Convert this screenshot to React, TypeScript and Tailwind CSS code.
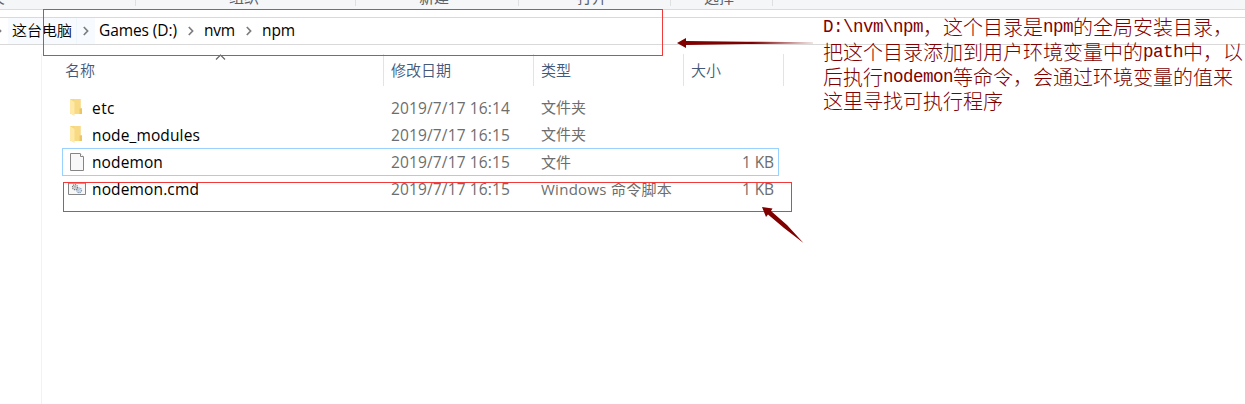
import React from "react";

const ribbonGroups = [
  { label: "夹", width: "w-[136px]", pad: "-ml-[10px]" },
  { label: "组织", width: "w-[220px]", pad: "ml-[93px]" },
  { label: "新建", width: "w-[163px]", pad: "ml-[63px]" },
  { label: "打开", width: "w-[152px]", pad: "ml-[58px]" },
  { label: "选择", width: "w-[102px]", pad: "ml-[33px]" },
];

const files = [
  { icon: "folder", name: "etc", nameW: 23, date: "2019/7/17 16:14", type: "文件夹", typeW: 45, size: "" },
  { icon: "folder", name: "node_modules", nameW: 108, date: "2019/7/17 16:15", type: "文件夹", typeW: 45, size: "" },
  { icon: "file", name: "nodemon", nameW: 71, date: "2019/7/17 16:15", type: "文件", typeW: 30, size: "1 KB" },
  { icon: "script", name: "nodemon.cmd", nameW: 107, date: "2019/7/17 16:15", type: "Windows 命令脚本", typeW: 131, size: "1 KB" },
];

/** Single-line label whose glyphs are fitted to a fixed advance width. */
function Label({ text, width }: { text: string; width: number }) {
  const ref = React.useRef<HTMLSpanElement>(null);
  React.useLayoutEffect(() => {
    const el = ref.current;
    if (!el) return;
    el.style.letterSpacing = "0px";
    const natural = el.getBoundingClientRect().width;
    el.style.letterSpacing = `${(width - natural) / text.length}px`;
  }, [text, width]);
  return (
    <span ref={ref} className="inline-block whitespace-pre">
      {text}
    </span>
  );
}

function Chevron() {
  return (
    <svg width="6" height="10" viewBox="0 0 6 10" className="shrink-0">
      <path d="M0.8 1L4.6 5L0.8 9" fill="none" stroke="#7d7d7d" strokeWidth="1.7" />
    </svg>
  );
}

function FileIcon({ kind }: { kind: string }) {
  if (kind === "folder") {
    return (
      <svg width="18" height="20" viewBox="0 0 18 20">
        <path d="M2 0h10.5v9.5H14V15H2Z" fill="#f5d57f" />
        <path d="M6 0h6.5v9.5H14V15H6Z" fill="#f8d984" />
        <path d="M2 0l4.5 3V17L2 14.5Z" fill="#ffe9a6" />
        <path d="M11.5 9.5H14V15h-2.5Z" fill="#edc664" />
      </svg>
    );
  }
  if (kind === "file") {
    return (
      <svg width="18" height="20" viewBox="0 0 18 20">
        <path d="M2.5 0.5H12L15.5 4V17.5H2.5Z" fill="#f8f8f8" stroke="#858585" />
        <path d="M12.5 0.5V3.5H15.5" fill="#fff" stroke="#858585" />
      </svg>
    );
  }
  return (
    <svg width="18" height="20" viewBox="0 0 18 20">
      <path d="M0.5 2.5H17.5V14.5H0.5Z" fill="#f7f7f7" stroke="#858585" />
      <path d="M1 3.5H17" stroke="#a4a4a4" />
      <circle cx="7" cy="7.2" r="2.5" fill="#eee" stroke="#777" strokeWidth="1.2" strokeDasharray="1.2 .7" />
      <circle cx="7" cy="7.2" r="1" fill="#fff" stroke="#888" strokeWidth=".7" />
      <circle cx="11.2" cy="10.3" r="2.3" fill="#e6f0fa" stroke="#829bb8" strokeWidth="1.2" strokeDasharray="1.2 .6" />
      <circle cx="11.2" cy="10.3" r=".9" fill="#fff" stroke="#8ba5c0" strokeWidth=".6" />
    </svg>
  );
}

export default function App() {
  return (
    <div className="relative flex h-[404px] w-[1245px] flex-col overflow-hidden bg-white font-['Open_Sans','Noto_Sans_CJK_SC',sans-serif] text-[15px] font-normal">
      <div className="flex h-[10px] shrink-0 overflow-hidden border-b border-[#dadbdc] bg-[#f5f6f7] text-[#5a6069]">
        {ribbonGroups.map((g) => (
          <div key={g.label} className={`${g.width} h-[6px] shrink-0 border-r border-[#dfe0e1]`}>
            <div className={`${g.pad} -mt-[13px] leading-5 whitespace-nowrap`}>{g.label}</div>
          </div>
        ))}
      </div>

      <div className="mt-[7px] flex h-[28px] shrink-0 items-center border-y border-[#d9d9d9] text-black">
        <div className="-ml-[4px] flex w-[12px]"><Chevron /></div>
        <div className="flex h-full w-[68px] items-center bg-[#f7fbff] pb-[2px] pl-[4px] font-[350]"><Label text="这台电脑" width={60} /></div>
        <div className="flex h-full w-[19px] items-center border-l border-[#edf6fd] bg-[#f7fbff] pl-[6px]"><Chevron /></div>
        <div className="-mt-px ml-[4px] w-[89px] text-[15.5px]"><Label text="Games (D:)" width={78} /></div>
        <div className="flex w-[16px]"><Chevron /></div>
        <div className="-mt-px w-[42px] text-[15.5px]"><Label text="nvm" width={31} /></div>
        <div className="flex w-[16px]"><Chevron /></div>
        <div className="-mt-px text-[15.5px]"><Label text="npm" width={33} /></div>
      </div>

      <div className="flex grow pt-[9px]">
        <div className="w-[42px] shrink-0 border-r border-[#f2f2f2]" />
        <div className="w-[742px]">
          <div className="flex h-[32px] items-center font-[350] text-[#44597a]">
            <div className="relative flex h-full w-[342px] items-center border-r border-[#e3e3e3] pl-[23px]">
              <Label text="名称" width={30} />
              <svg width="11" height="6" viewBox="0 0 11 6" className="absolute top-0 left-[173px]">
                <path d="M1 5.5L5.5 1L10 5.5" fill="none" stroke="#666" strokeWidth="1.2" />
              </svg>
            </div>
            <div className="flex h-full w-[150px] items-center border-r border-[#e3e3e3] pl-[7px]"><Label text="修改日期" width={60} /></div>
            <div className="flex h-full w-[150px] items-center border-r border-[#e3e3e3] pl-[7px]"><Label text="类型" width={30} /></div>
            <div className="flex h-full w-[100px] items-center border-r border-[#e3e3e3] pl-[7px]"><Label text="大小" width={30} /></div>
          </div>
          <div className="mt-[8px] ml-[20px] w-[717px]">
            {files.map((f) => (
              <div
                key={f.name}
                className={`flex items-center pt-[2px] text-[#6d6d6d] ${f.icon === "file" ? "h-[28px] shadow-[inset_0_0_0_1px_#99d1ff]" : f.icon === "script" ? "h-[26px]" : "h-[27px]"}`}
              >
                <div className="w-[30px] shrink-0 pl-[6px]"><FileIcon kind={f.icon} /></div>
                <div className="w-[299px] shrink-0 text-[15.5px] text-black"><Label text={f.name} width={f.nameW} /></div>
                <div className="w-[150px] shrink-0 text-[15.5px]"><Label text={f.date} width={119} /></div>
                <div className="w-[150px] shrink-0 pb-[2px]"><Label text={f.type} width={f.typeW} /></div>
                <div className="w-[83px] shrink-0 text-right text-[15.5px]">{f.size && <Label text={f.size} width={32} />}</div>
              </div>
            ))}
          </div>
        </div>
      </div>

      <div className="absolute top-[9px] left-[43px] h-[47px] w-[620px] border border-[#f23a3a]" />
      <div className="absolute top-[182px] left-[63px] h-[30px] w-[729px] border border-[#f23a3a]" />

      <svg className="absolute top-[36px] left-[676px]" width="138" height="14" viewBox="0 0 138 14">
        <defs>
          <linearGradient id="tail" x1="0" x2="1">
            <stop offset="0.55" stopColor="#800000" />
            <stop offset="1" stopColor="#800000" stopOpacity="0.15" />
          </linearGradient>
        </defs>
        <path d="M1 7L10 2V5L70 5.7L137 6.2V7.8L70 8L10 9V12Z" fill="url(#tail)" />
      </svg>
      <svg className="absolute top-[206px] left-[760px]" width="46" height="40" viewBox="0 0 46 40">
        <path d="M2 1L12.5 2.5L11 5L27 19L43.5 37L24 22L8 8.5L6 11Z" fill="#800000" />
      </svg>

      <div className="absolute top-[15px] left-[823px] w-[422px] font-['Noto_Sans_CJK_SC',sans-serif] text-[20px] leading-[24.8px] font-light whitespace-nowrap text-[#800000]">
        <div className="flex h-[24.8px]"><Latin text={"D:\\nvm\\npm"} />，这个目录是<Latin text="npm" />的全局安装目录，</div>
        <div className="flex h-[24.8px]">把这个目录添加到用户环境变量中的<Latin text="path" />中，以</div>
        <div className="flex h-[24.8px]">后执行<Latin text="nodemon" />等命令，会通过环境变量的值来</div>
        <div className="flex h-[24.8px]">这里寻找可执行程序</div>
      </div>
    </div>
  );
}

/** Half-width run: every letter advances ten pixels. */
function Latin({ text }: { text: string }) {
  return (
    <span className="font-['Liberation_Mono',monospace] text-[17.5px] font-normal">
      <Label text={text} width={text.length * 10} />
    </span>
  );
}
